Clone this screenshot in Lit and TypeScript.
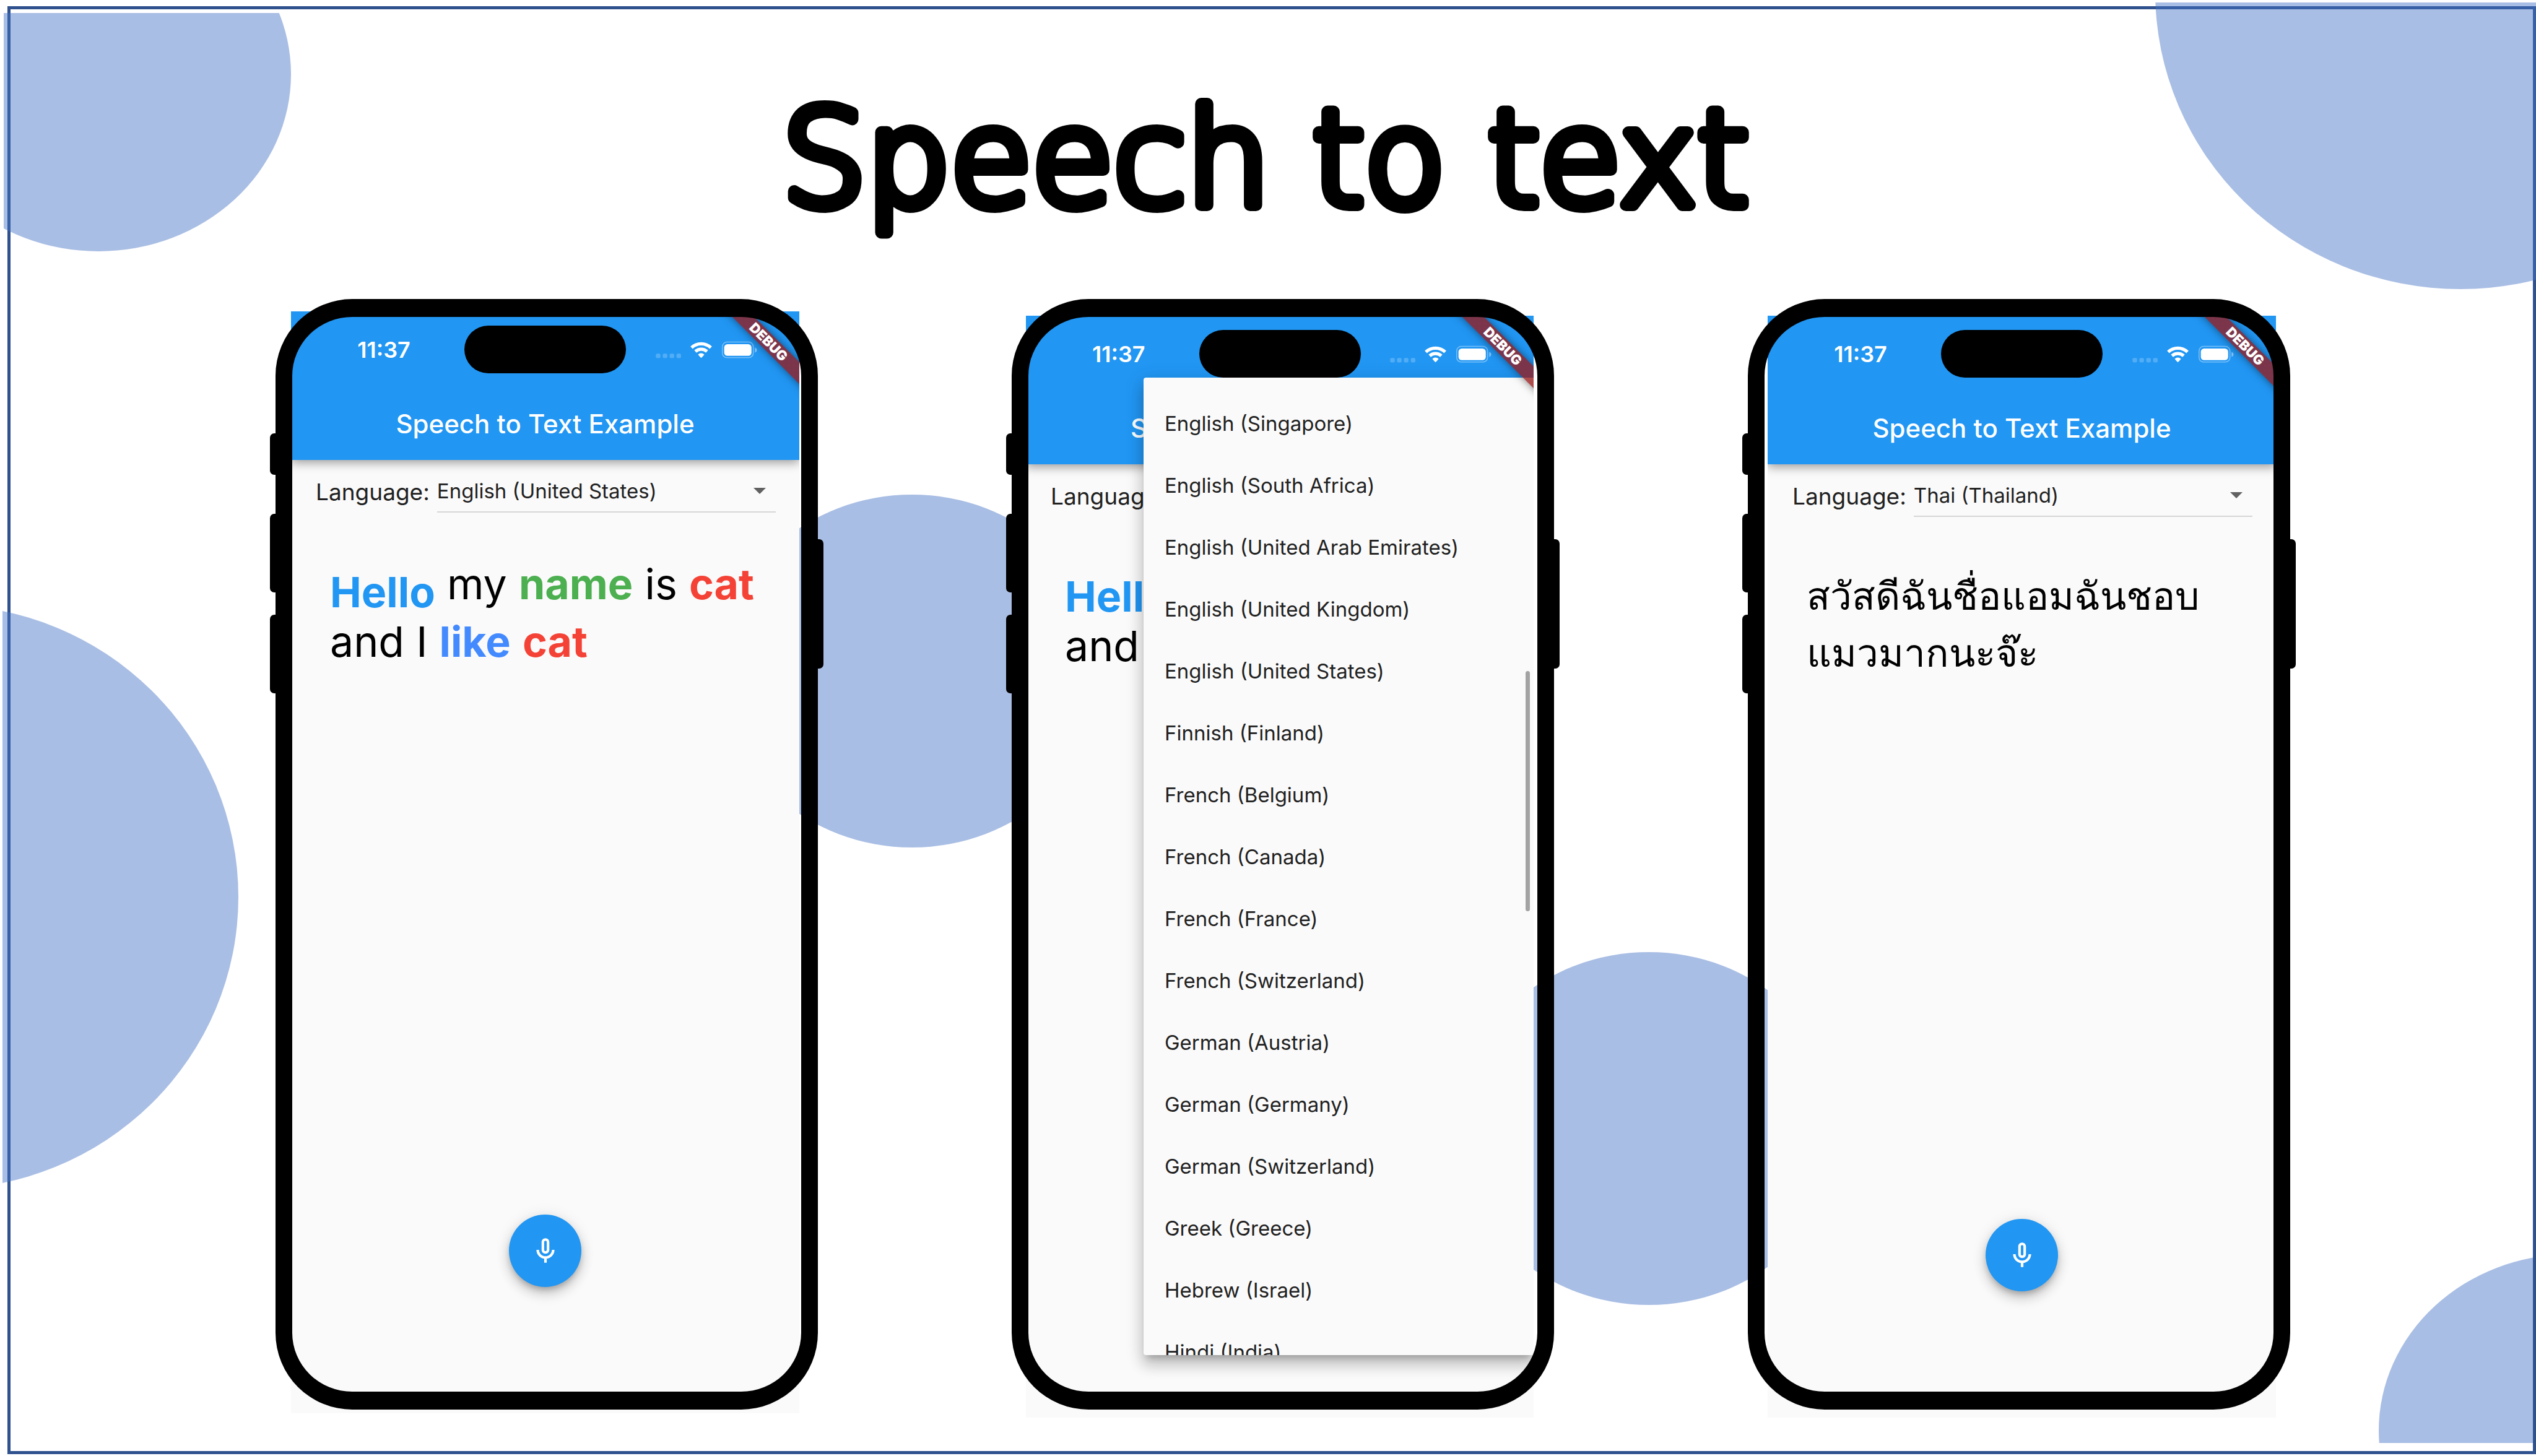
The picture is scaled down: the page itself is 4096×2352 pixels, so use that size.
import { LitElement, html, css, nothing } from "lit";
import { customElement, property } from "lit/decorators.js";

interface Word {
  text: string;
  tone?: "hello" | "green" | "red" | "indigo";
}

interface Demo {
  id: string;
  placement: "first" | "second" | "third";
  language: string;
  words: Word[];
  script: "latin" | "thai";
  menuOpen: boolean;
}

const LANGUAGES = [
  "English (Singapore)",
  "English (South Africa)",
  "English (United Arab Emirates)",
  "English (United Kingdom)",
  "English (United States)",
  "Finnish (Finland)",
  "French (Belgium)",
  "French (Canada)",
  "French (France)",
  "French (Switzerland)",
  "German (Austria)",
  "German (Germany)",
  "German (Switzerland)",
  "Greek (Greece)",
  "Hebrew (Israel)",
  "Hindi (India)",
];

const ENGLISH_WORDS: Word[] = [
  { text: "Hello", tone: "hello" },
  { text: "my" },
  { text: "name", tone: "green" },
  { text: "is" },
  { text: "cat", tone: "red" },
  { text: "and" },
  { text: "I" },
  { text: "like", tone: "indigo" },
  { text: "cat", tone: "red" },
];

const DEMOS: Demo[] = [
  {
    id: "english",
    placement: "first",
    language: "English (United States)",
    words: ENGLISH_WORDS,
    script: "latin",
    menuOpen: false,
  },
  {
    id: "picker",
    placement: "second",
    language: "English (United States)",
    words: ENGLISH_WORDS,
    script: "latin",
    menuOpen: true,
  },
  {
    id: "thai",
    placement: "third",
    language: "Thai (Thailand)",
    words: [{ text: "สวัสดีฉันชื่อแอมฉันชอบ" }, { text: "แมวมากนะจ๊ะ" }],
    script: "thai",
    menuOpen: false,
  },
];

/** Signal dots, Wi-Fi and battery at the right of the status bar. */
const statusIcons = html`
  <svg class="status-icons" viewBox="68 160 532 96" aria-hidden="true">
    <g fill="#fff" fill-opacity="0.22">
      <rect x="69" y="228" width="24" height="24" rx="7" />
      <rect x="105" y="228" width="24" height="24" rx="7" />
      <rect x="141" y="228" width="24" height="24" rx="7" />
      <rect x="177" y="228" width="24" height="24" rx="7" />
    </g>
    <g fill="none" stroke="#fff" stroke-width="17">
      <path d="M256 197a73 73 0 0 1 101 0" />
      <path d="M276 217a45 45 0 0 1 61 0" />
    </g>
    <path fill="#fff" d="M290 233q16-14 33 0q-7 9-16.500 18q-9-9-16.500-18z" />
    <rect x="417.500" y="167.500" width="162" height="82" rx="24" fill="none" stroke="#fff" stroke-opacity="0.4" stroke-width="5" />
    <rect x="427" y="179" width="143" height="61" rx="17" fill="#fff" />
    <path fill="#fff" fill-opacity="0.45" d="M588 197q10 4 10 13t-10 13z" />
  </svg>
`;

const micIcon = html`
  <svg class="mic-icon" viewBox="0 0 24 24" aria-hidden="true">
    <path
      fill="#fff"
      d="M12 14c1.660 0 3-1.340 3-3V5c0-1.660-1.340-3-3-3S9 3.340 9 5v6c0 1.660 1.340 3 3 3zm-1-9c0-.55.45-1 1-1s1 .45 1 1v6c0 .55-.45 1-1 1s-1-.45-1-1V5zm6 6c0 2.760-2.240 5-5 5s-5-2.240-5-5H5c0 3.530 2.610 6.430 6 6.920V21h2v-3.080c3.390-.49 6-3.390 6-6.920h-2z"
    />
  </svg>
`;

@customElement("language-menu")
export class LanguageMenu extends LitElement {
  static styles = css`
    :host {
      display: block;
      background: #fafafa;
      border-radius: 4px 0 0 4px;
      box-shadow:
        0 10px 10px -6px rgba(0, 0, 0, 0.2),
        0 17px 21px 2px rgba(0, 0, 0, 0.14),
        0 6px 29px 4px rgba(0, 0, 0, 0.12);
    }
    .list {
      box-sizing: border-box;
      height: 100%;
      margin: 0;
      padding: 24px 0 0;
      list-style: none;
      overflow: hidden;
    }
    .item {
      display: block;
      width: 100%;
      height: 100px;
      padding: 0 34px;
      border: 0;
      background: none;
      color: #212121;
      font: inherit;
      text-align: left;
      white-space: nowrap;
    }
    .scroll-thumb {
      position: absolute;
      top: 30%;
      right: 6px;
      width: 7px;
      height: 388px;
      border-radius: 4px;
      background: #a3a3a3;
    }
  `;

  render() {
    return html`
      <ul class="list">
        ${LANGUAGES.map((name) => html`<li><button class="item" type="button">${name}</button></li>`)}
      </ul>
      <div class="scroll-thumb"></div>
    `;
  }
}

@customElement("phone-demo")
export class PhoneDemo extends LitElement {
  @property({ attribute: false }) demo!: Demo;

  static styles = css`
    :host {
      display: grid;
      position: relative;
      min-width: 0;
    }
    .screen {
      position: relative;
      display: flex;
      flex-direction: column;
      min-width: 0;
      background: #fafafa;
      overflow: hidden;
    }
    .first {
      margin: 20px 30px -6px 25px;
    }
    .second {
      margin: 27px 33px -13px 23px;
    }
    .third {
      margin: 27px 23px -13px 32px;
    }
    .app-bar {
      background: #2196f3;
      color: #fff;
      box-shadow: 0 4px 16px rgba(0, 0, 0, 0.4);
    }
    .status {
      display: grid;
      grid-template-columns: 1fr 261px 1fr;
      align-items: center;
      justify-items: center;
      padding: 23px 20px;
    }
    .time {
      font-size: 36px;
      font-weight: 600;
    }
    .island {
      width: 100%;
      height: 77px;
      border-radius: 39px;
      background: #000;
    }
    .status-icons {
      width: 164px;
      height: 30px;
    }
    .title {
      margin: 0;
      height: 117px;
      line-height: 117px;
      font-size: 42px;
      font-weight: 500;
      text-align: center;
      white-space: nowrap;
    }
    .language {
      display: flex;
      align-items: center;
      gap: 12px;
      padding: 17px 38px 0 40px;
      color: #212121;
    }
    .language-label {
      font-size: 37px;
    }
    .select-box {
      flex: 1;
      display: grid;
      align-items: center;
      min-width: 0;
      border-bottom: 2px solid #d6d6d6;
    }
    .select {
      grid-area: 1 / 1;
      height: 66px;
      padding: 0;
      border: 0;
      appearance: none;
      background: none;
      color: inherit;
      font: inherit;
    }
    .arrow {
      grid-area: 1 / 1;
      justify-self: end;
      width: 20px;
      height: 10px;
      margin-right: 16px;
      pointer-events: none;
    }
    .speech {
      margin: 69px 63px 0;
      color: #000;
      font-size: 68px;
      line-height: 92px;
    }
    .thai {
      margin-top: 80px;
      font-family: "Noto Sans", sans-serif;
      font-size: 62px;
    }
    .hello,
    .green,
    .red,
    .indigo {
      font-weight: 700;
    }
    .hello {
      color: #2196f3;
      line-height: 1;
      vertical-align: -13px;
    }
    .green {
      color: #4caf50;
    }
    .red {
      color: #f44336;
    }
    .indigo {
      color: #448aff;
    }
    .mic {
      display: grid;
      place-items: center;
      width: 117px;
      height: 117px;
      margin: auto auto 204px;
      padding: 0;
      border: 0;
      border-radius: 50%;
      background: #2196f3;
      box-shadow:
        0 6px 10px -2px rgba(0, 0, 0, 0.2),
        0 12px 20px rgba(0, 0, 0, 0.16),
        0 2px 24px rgba(0, 0, 0, 0.1);
    }
    .mic-icon {
      width: 50px;
      height: 50px;
    }
    .menu {
      position: absolute;
      inset: 100px 0 101px 190px;
    }
    .corner {
      position: absolute;
      top: 0;
      right: 0;
      width: 220px;
      height: 220px;
      overflow: hidden;
      pointer-events: none;
    }
    .ribbon {
      position: absolute;
      top: 37px;
      right: -100px;
      width: 300px;
      height: 25px;
      line-height: 25px;
      background: linear-gradient(rgba(183, 28, 28, 0.63), rgba(183, 28, 28, 0.63)), rgba(0, 0, 0, 0.36);
      box-shadow: 0 0 14px rgba(0, 0, 0, 0.5);
      color: #fff;
      font-size: 22px;
      font-weight: 900;
      text-align: center;
      transform: rotate(45deg);
    }
    .frame {
      position: absolute;
      inset: 0;
      border: solid #000;
      border-width: 29px 27px;
      border-radius: 124px;
      pointer-events: none;
    }
    .key {
      position: absolute;
      width: 18px;
      background: #000;
      border-radius: 7px;
    }
    .mute {
      left: -36px;
      top: 188px;
      height: 67px;
    }
    .volume-up {
      left: -36px;
      top: 318px;
      height: 127px;
    }
    .volume-down {
      left: -36px;
      top: 481px;
      height: 127px;
    }
    .power {
      right: -36px;
      top: 359px;
      height: 209px;
    }
  `;

  render() {
    const { id, placement, language, words, script, menuOpen } = this.demo;
    return html`
      <section class="screen ${placement}">
        <header class="app-bar">
          <div class="status">
            <span class="time">11:37</span>
            <span class="island"></span>
            ${statusIcons}
          </div>
          <h2 class="title">Speech to Text Example</h2>
        </header>
        <div class="language">
          <label class="language-label" for="language-${id}">Language:</label>
          <div class="select-box">
            <select class="select" id="language-${id}">
              <option selected>${language}</option>
            </select>
            <svg class="arrow" viewBox="0 0 20 10" aria-hidden="true"><path fill="#616161" d="M0 0h20L10 10z" /></svg>
          </div>
        </div>
        <p class="speech ${script}">
          ${words.map((word) => html`<span class=${word.tone ?? nothing}>${word.text}</span> `)}
        </p>
        <button class="mic" type="button" aria-label="Start listening">${micIcon}</button>
        ${menuOpen ? html`<language-menu class="menu"></language-menu>` : nothing}
        <div class="corner"><div class="ribbon">DEBUG</div></div>
      </section>
      <div class="frame">
        <span class="key mute"></span>
        <span class="key volume-up"></span>
        <span class="key volume-down"></span>
        <span class="key power"></span>
      </div>
    `;
  }
}

@customElement("app-root")
export class AppRoot extends LitElement {
  static styles = css`
    :host {
      display: block;
      font-family: Inter, "Liberation Sans", sans-serif;
      font-size: 33px;
      background: #fff;
    }
    .slide {
      position: relative;
      display: flex;
      flex-direction: column;
      box-sizing: border-box;
      min-height: 100vh;
      padding: 10px 0 3px 12px;
    }
    .sheet {
      flex: 1;
      display: flex;
      flex-direction: column;
      border: 5px solid #2f528f;
    }
    .circles {
      position: absolute;
      inset: 0;
      width: 100%;
      height: 100%;
    }
    .heading {
      position: relative;
      margin: 0;
      padding-right: 20px;
      font-weight: 200;
    }
    .heading-art {
      display: block;
      width: 100%;
      height: 468px;
    }
    .heading-text {
      font-family: "DejaVu Sans", sans-serif;
      font-size: 214px;
      text-anchor: middle;
      stroke: #000;
      stroke-width: 20px;
      stroke-linejoin: round;
    }
    .phones {
      flex: 1;
      position: relative;
      display: grid;
      grid-template-columns: repeat(3, 1fr);
      gap: 313px;
      padding: 0 392px 67px 428px;
    }
  `;

  render() {
    return html`
      <main class="slide">
        <div class="sheet">
          <svg class="circles" viewBox="0 0 4096 2352" preserveAspectRatio="none" aria-hidden="true">
            <defs>
              <clipPath id="top-left"><rect x="6" y="21" width="600" height="500" /></clipPath>
              <clipPath id="top-right"><rect x="3400" y="4" width="696" height="600" /></clipPath>
              <clipPath id="left"><rect x="4" y="900" width="500" height="1100" /></clipPath>
              <clipPath id="bottom-right"><rect x="3700" y="1900" width="391" height="431" /></clipPath>
            </defs>
            <g fill="#4472c4" fill-opacity="0.46">
              <ellipse cx="159" cy="120" rx="311" ry="286" clip-path="url(#top-left)" />
              <ellipse cx="3974" cy="-13" rx="493" ry="480" clip-path="url(#top-right)" />
              <ellipse cx="-94" cy="1449" rx="479" ry="472" clip-path="url(#left)" />
              <ellipse cx="1473" cy="1084" rx="310" ry="285" />
              <ellipse cx="2663" cy="1823" rx="310" ry="285" />
              <ellipse cx="4152" cy="2311" rx="310" ry="285" clip-path="url(#bottom-right)" />
            </g>
          </svg>
          <h1 class="heading">
            <svg class="heading-art"><text class="heading-text" x="50%" y="316">Speech to text</text></svg>
          </h1>
          <div class="phones">${DEMOS.map((demo) => html`<phone-demo .demo=${demo}></phone-demo>`)}</div>
        </div>
      </main>
    `;
  }
}
